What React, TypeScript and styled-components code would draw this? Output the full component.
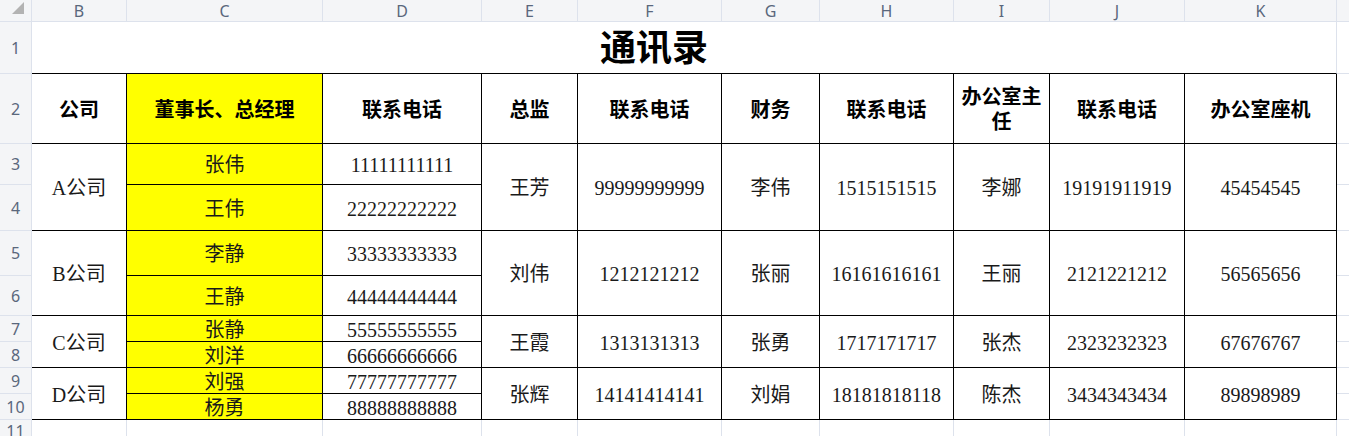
import React from "react";
import styled, { createGlobalStyle, css } from "styled-components";

const Global = createGlobalStyle`
  html, body { margin: 0; padding: 0; background: #ffffff; overflow: hidden; }
  #root { width: 1349px; height: 436px; overflow: hidden; }
`;

const GRID_LIGHT = "#dde2ec";
const HEAD_BG = "#f4f5f7";

const Sheet = styled.div`
  display: grid;
  grid-template-columns: 32px 95px 196px 159px 96px 144px 98px 134px 96px 135px 152px 1fr;
  grid-template-rows: 22px 52px 70px 41px 46px 45px 40px 26px 26px 26px 26px 22px;
  width: 1349px;
  font-family: "Liberation Serif", "Noto Sans CJK SC", serif;
  color: #111;
`;

type Place = { $r: number; $c: number; $rs?: number; $cs?: number };

const place = css<Place>`
  grid-row: ${(p) => p.$r} / span ${(p) => p.$rs ?? 1};
  grid-column: ${(p) => p.$c} / span ${(p) => p.$cs ?? 1};
`;

const Corner = styled.div<Place>`
  ${place};
  box-sizing: border-box;
  background: ${HEAD_BG};
  border-right: 1px solid ${GRID_LIGHT};
  border-bottom: 1px solid ${GRID_LIGHT};
  display: flex;
  justify-content: flex-end;
  align-items: flex-start;
  padding: 2px 7px 0 0;
`;

const CornerMark = styled.span`
  width: 0;
  height: 0;
  border-left: 12px solid transparent;
  border-bottom: 12px solid #b3b3b3;
`;

const HeadCell = styled.div<Place>`
  ${place};
  box-sizing: border-box;
  background: ${HEAD_BG};
  border-right: 1px solid ${GRID_LIGHT};
  border-bottom: 1px solid ${GRID_LIGHT};
  display: flex;
  align-items: center;
  justify-content: center;
  font-family: "Noto Sans", "Liberation Sans", sans-serif;
  font-size: 16px;
  color: #5a677c;
  overflow: hidden;
`;

const Title = styled.div<Place>`
  ${place};
  box-sizing: border-box;
  border-right: 1px solid ${GRID_LIGHT};
  border-bottom: 1px solid #000;
  display: flex;
  align-items: center;
  justify-content: center;
  padding-right: 60px;
  padding-bottom: 4px;
  font-family: "Noto Sans CJK SC", sans-serif;
  font-weight: 700;
  font-size: 36px;
  line-height: 1.2;
  color: #000;
`;

const Cell = styled.div<Place & { $bold?: boolean; $yellow?: boolean; $table?: boolean }>`
  ${place};
  box-sizing: border-box;
  border-right: 1px solid ${(p) => (p.$table ? "#000" : GRID_LIGHT)};
  border-bottom: 1px solid ${(p) => (p.$table ? "#000" : GRID_LIGHT)};
  background: ${(p) => (p.$yellow ? "#ffff00" : "transparent")};
  display: flex;
  align-items: center;
  justify-content: center;
  text-align: center;
  padding: 3px 7px 0;
  font-size: 20px;
  line-height: 1.25;
  font-weight: ${(p) => (p.$bold ? 700 : 400)};
  color: ${(p) => (p.$bold ? "#000" : "#1a1a1a")};
  overflow: visible;
  white-space: normal;
`;

const letters = ["B", "C", "D", "E", "F", "G", "H", "I", "J", "K", ""];
const headers = ["公司", "董事长、总经理", "联系电话", "总监", "联系电话", "财务", "联系电话", "办公室主任", "联系电话", "办公室座机"];

type Group = {
  company: string;
  bosses: [string, string];
  phones: [string, string];
  director: string;
  dirPhone: string;
  finance: string;
  finPhone: string;
  office: string;
  offPhone: string;
  landline: string;
};

const groups: Group[] = [
  { company: "A公司", bosses: ["张伟", "王伟"], phones: ["11111111111", "22222222222"], director: "王芳", dirPhone: "99999999999", finance: "李伟", finPhone: "1515151515", office: "李娜", offPhone: "19191911919", landline: "45454545" },
  { company: "B公司", bosses: ["李静", "王静"], phones: ["33333333333", "44444444444"], director: "刘伟", dirPhone: "1212121212", finance: "张丽", finPhone: "16161616161", office: "王丽", offPhone: "2121221212", landline: "56565656" },
  { company: "C公司", bosses: ["张静", "刘洋"], phones: ["55555555555", "66666666666"], director: "王霞", dirPhone: "1313131313", finance: "张勇", finPhone: "1717171717", office: "张杰", offPhone: "2323232323", landline: "67676767" },
  { company: "D公司", bosses: ["刘强", "杨勇"], phones: ["77777777777", "88888888888"], director: "张辉", dirPhone: "14141414141", finance: "刘娟", finPhone: "18181818118", office: "陈杰", offPhone: "3434343434", landline: "89898989" },
];

export default function App() {
  const rowNums = Array.from({ length: 11 }, (_, i) => i + 1);
  return (
    <>
      <Global />
      <Sheet>
        <Corner $r={1} $c={1}>
          <CornerMark />
        </Corner>
        {letters.map((l, i) => (
          <HeadCell key={"col" + i} $r={1} $c={i + 2}>
            {l}
          </HeadCell>
        ))}
        {rowNums.map((n) => (
          <HeadCell key={"row" + n} $r={n + 1} $c={1}>
            {n}
          </HeadCell>
        ))}

        <Title $r={2} $c={2} $cs={10}>
          通讯录
        </Title>
        <Cell $r={2} $c={12} />

        {headers.map((h, i) => (
          <Cell key={"h" + i} $r={3} $c={i + 2} $bold $table $yellow={i === 1}>
            {h}
          </Cell>
        ))}
        <Cell $r={3} $c={12} />

        {groups.map((g, gi) => {
          const r = 4 + gi * 2;
          return (
            <React.Fragment key={g.company}>
              <Cell $r={r} $c={2} $rs={2} $table>{g.company}</Cell>
              <Cell $r={r} $c={3} $table $yellow>{g.bosses[0]}</Cell>
              <Cell $r={r + 1} $c={3} $table $yellow>{g.bosses[1]}</Cell>
              <Cell $r={r} $c={4} $table>{g.phones[0]}</Cell>
              <Cell $r={r + 1} $c={4} $table>{g.phones[1]}</Cell>
              <Cell $r={r} $c={5} $rs={2} $table>{g.director}</Cell>
              <Cell $r={r} $c={6} $rs={2} $table>{g.dirPhone}</Cell>
              <Cell $r={r} $c={7} $rs={2} $table>{g.finance}</Cell>
              <Cell $r={r} $c={8} $rs={2} $table>{g.finPhone}</Cell>
              <Cell $r={r} $c={9} $rs={2} $table>{g.office}</Cell>
              <Cell $r={r} $c={10} $rs={2} $table>{g.offPhone}</Cell>
              <Cell $r={r} $c={11} $rs={2} $table>{g.landline}</Cell>
              <Cell $r={r} $c={12} />
              <Cell $r={r + 1} $c={12} />
            </React.Fragment>
          );
        })}

        {Array.from({ length: 11 }, (_, i) => (
          <Cell key={"r11" + i} $r={12} $c={i + 2} />
        ))}
      </Sheet>
    </>
  );
}
